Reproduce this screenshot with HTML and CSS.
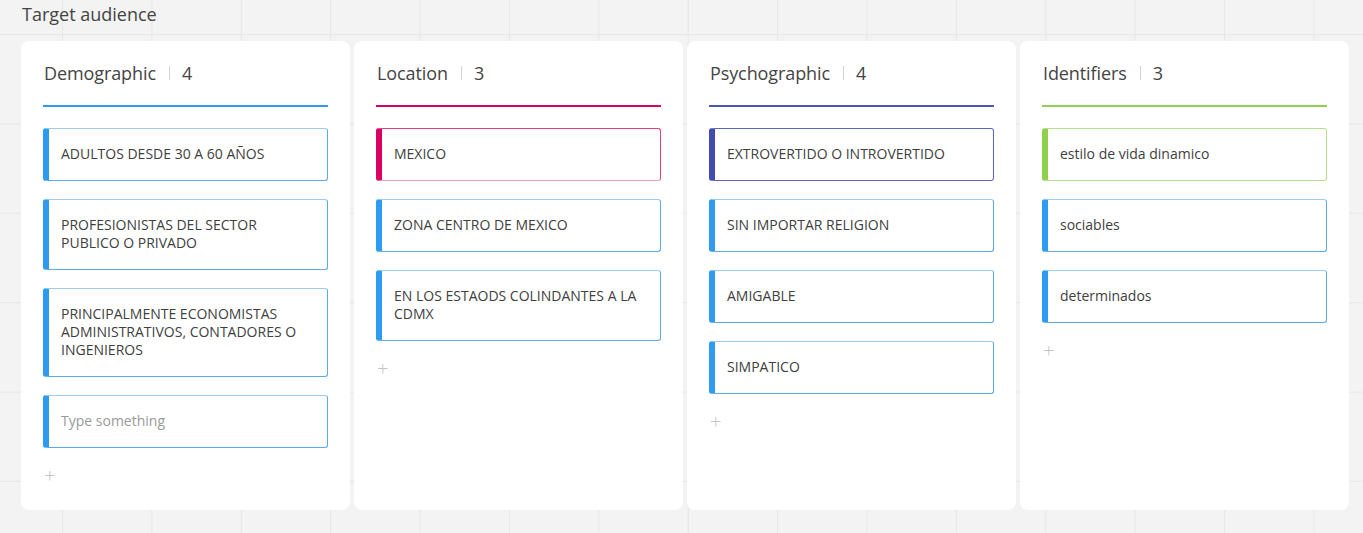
FILE: index.html
```html
<!DOCTYPE html>
<html>
<head>
<meta charset="utf-8">
<link rel="stylesheet" href="styles.css">
</head>
<body>
<div class="page-title">Target audience</div>
<div class="board">
  <div class="column">
    <div class="col-head blue"><span class="col-name">Demographic</span><span class="sep"></span><span class="count">4</span></div>
    <div class="items">
      <div class="item blue">ADULTOS DESDE 30 A 60 AÑOS</div>
      <div class="item blue">PROFESIONISTAS DEL SECTOR PUBLICO O PRIVADO</div>
      <div class="item blue">PRINCIPALMENTE ECONOMISTAS ADMINISTRATIVOS, CONTADORES O INGENIEROS</div>
      <div class="item blue placeholder">Type something</div>
    </div>
    <div class="add">+</div>
  </div>
  <div class="column">
    <div class="col-head pink"><span class="col-name">Location</span><span class="sep"></span><span class="count">3</span></div>
    <div class="items">
      <div class="item pink">MEXICO</div>
      <div class="item blue">ZONA CENTRO DE MEXICO</div>
      <div class="item blue">EN LOS ESTAODS COLINDANTES A LA CDMX</div>
    </div>
    <div class="add">+</div>
  </div>
  <div class="column">
    <div class="col-head indigo"><span class="col-name">Psychographic</span><span class="sep"></span><span class="count">4</span></div>
    <div class="items">
      <div class="item indigo">EXTROVERTIDO O INTROVERTIDO</div>
      <div class="item blue">SIN IMPORTAR RELIGION</div>
      <div class="item blue">AMIGABLE</div>
      <div class="item blue">SIMPATICO</div>
    </div>
    <div class="add">+</div>
  </div>
  <div class="column">
    <div class="col-head green"><span class="col-name">Identifiers</span><span class="sep"></span><span class="count">3</span></div>
    <div class="items">
      <div class="item green">estilo de vida dinamico</div>
      <div class="item blue">sociables</div>
      <div class="item blue">determinados</div>
    </div>
    <div class="add">+</div>
  </div>
</div>
</body>
</html>
```
FILE: styles.css
```css
html, body {
  margin: 0;
  padding: 0;
}
body {
  width: 1363px;
  height: 533px;
  overflow: hidden;
  font-family: "Open Sans", "Liberation Sans", sans-serif;
  color: #333;
  background-color: #f3f3f3;
  background-image:
    linear-gradient(to right, #e7e7e7 1px, transparent 1px),
    linear-gradient(to bottom, #e7e7e7 1px, transparent 1px);
  background-size: 89.4px 89.4px;
  background-position: 62px 34px;
}
.page-title {
  padding: 2px 0 0 22px;
  height: 39px;
  font-size: 18px;
  line-height: 24px;
  color: #444;
}
.board {
  display: flex;
  gap: 4px;
  padding-left: 21px;
}
.column {
  width: 285px;
  height: 449px;
  padding: 20px 22px 0 22px;
  background: #fff;
  border-radius: 8px;
  flex: none;
}
.col-head {
  display: flex;
  align-items: center;
  height: 24px;
  padding: 0 0 20px 1px;
  border-bottom: 2px solid #2d9bf0;
  font-size: 18px;
  line-height: 24px;
  letter-spacing: -0.1px;
  color: #444;
}
.col-head.pink { border-bottom-color: #da0063; }
.col-head.indigo { border-bottom-color: #4c55b7; }
.col-head.green { border-bottom-color: #8fd14f; }
.sep {
  width: 1px;
  height: 14px;
  background: #d6d6d6;
  margin: 0 12px 0 13px;
}
.items {
  display: flex;
  flex-direction: column;
  gap: 18px;
  margin-top: 21px;
}
.item {
  padding: 16px 12px 17px 12px;
  font-size: 14px;
  line-height: 18px;
  color: #404040;
  background: #fff;
  border: 1px solid #5aa9ee;
  border-top-color: #9ccbf3;
  border-left: 6px solid #2d9bf0;
  border-radius: 3px;
}
.item.pink {
  border-color: #e2407d;
  border-bottom-color: #f29bbd;
  border-left-color: #da0063;
}
.item.indigo {
  border-color: #5c64c2;
  border-left-color: #414bb2;
}
.item.green {
  border-color: #b3e08a;
  border-left-color: #8fd14f;
}
.item.placeholder {
  color: #9a9a9a;
}
.add {
  margin: 13px 0 0 1px;
  font-size: 20px;
  line-height: 30px;
  font-weight: 300;
  color: #c4c4c4;
}
```
